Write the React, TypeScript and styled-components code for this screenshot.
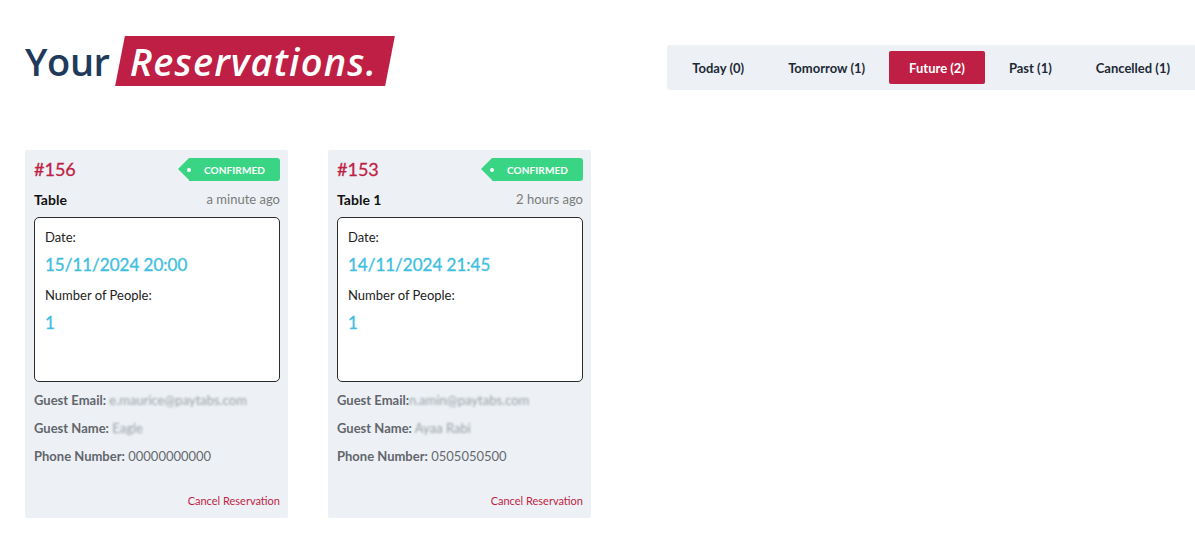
import React from "react";
import styled, { createGlobalStyle } from "styled-components";

const Global = createGlobalStyle`
  html, body { margin: 0; padding: 0; background: #ffffff; }
  body { font-family: Lato, "Noto Sans", sans-serif; overflow: hidden; }
  * { box-sizing: border-box; }
`;

const Page = styled.div`
  width: 1195px;
  height: 545px;
  padding: 36px 0 0 25px;
  overflow: hidden;
`;

const Header = styled.header`
  display: flex;
  align-items: flex-start;
`;

const Title = styled.h1`
  margin: 0;
  display: flex;
  align-items: center;
  height: 50px;
  font-family: "Open Sans", "Noto Sans", sans-serif;
  font-weight: 600;
  font-size: 38px;
  letter-spacing: -0.4px;
  color: #1f3a5b;
`;

const Highlight = styled.span`
  position: relative;
  display: inline-flex;
  align-items: center;
  height: 50px;
  margin-left: 10px;
  padding: 0 12px 0 10px;
  color: #ffffff;
  font-style: italic;
  letter-spacing: 1.2px;
  z-index: 0;
  &::before {
    content: "";
    position: absolute;
    inset: 0;
    background: #c01f45;
    transform: skewX(-11deg);
    z-index: -1;
  }
`;

const Tabs = styled.nav`
  margin-left: auto;
  margin-top: 9px;
  flex-shrink: 0;
  display: flex;
  gap: 4px;
  padding: 6px 5px;
  background: #edf1f5;
  border-radius: 3px 0 0 3px;
`;

const Tab = styled.button<{ $active?: boolean }>`
  height: 33px;
  padding: 0 20px;
  border: none;
  border-radius: 2px;
  background: ${(p) => (p.$active ? "#c01f45" : "transparent")};
  color: ${(p) => (p.$active ? "#ffffff" : "#1d2a36")};
  font-family: Lato, sans-serif;
  font-weight: 700;
  font-size: 13px;
  white-space: nowrap;
  cursor: pointer;
`;

const Cards = styled.section`
  display: flex;
  gap: 40px;
  margin-top: 60px;
`;

const Card = styled.article`
  width: 263px;
  height: 368px;
  background: #edf1f5;
  border-radius: 2px;
  padding: 8px 8px 10px 9px;
  display: flex;
  flex-direction: column;
`;

const CardHead = styled.div`
  display: flex;
  align-items: center;
  justify-content: space-between;
  height: 23px;
`;

const Number = styled.span`
  font-size: 18px;
  font-weight: 400;
  color: #c01f45;
  line-height: 23px;
  -webkit-text-stroke: 0.3px #c01f45;
`;

const Tag = styled.span`
  position: relative;
  display: inline-flex;
  align-items: center;
  height: 23px;
  width: 91px;
  padding-left: 15px;
  background: #3ad584;
  border-radius: 0 3px 3px 0;
  color: #ffffff;
  font-size: 10px;
  font-weight: 700;
  letter-spacing: 0.1px;
  &::before {
    content: "";
    position: absolute;
    left: -11px;
    top: 0;
    border-style: solid;
    border-width: 11.5px 11px 11.5px 0;
    border-color: transparent #3ad584 transparent transparent;
  }
  &::after {
    content: "";
    position: absolute;
    left: -2px;
    top: 9.5px;
    width: 4px;
    height: 4px;
    border-radius: 50%;
    background: #ffffff;
  }
`;

const SubRow = styled.div`
  display: flex;
  justify-content: space-between;
  align-items: center;
  margin-top: 8px;
  height: 20px;
`;

const TableName = styled.span`
  font-size: 14px;
  font-weight: 700;
  color: #111;
`;

const Ago = styled.span`
  font-size: 13px;
  color: #7a7a7a;
`;

const DetailBox = styled.div`
  margin-top: 8px;
  height: 165px;
  background: #ffffff;
  border: 1.5px solid #2b2b2b;
  border-radius: 5px;
  padding: 8.5px 10px;
`;

const Label = styled.div<{ $gap?: number }>`
  font-size: 13px;
  line-height: 20px;
  color: #222;
  margin-top: ${(p) => p.$gap ?? 0}px;
`;

const Value = styled.div`
  margin-top: 6px;
  font-size: 17px;
  line-height: 24px;
  font-weight: 400;
  color: #40bfdf;
  -webkit-text-stroke: 0.35px #40bfdf;
`;

const Info = styled.div`
  margin-top: 8px;
  display: flex;
  flex-direction: column;
  gap: 8px;
`;

const InfoRow = styled.div`
  font-size: 13px;
  line-height: 20px;
  color: #666a70;
  white-space: nowrap;
`;

const InfoLabel = styled.b`
  font-weight: 700;
  color: #62666c;
`;

const Blurred = styled.span`
  color: #9aa0a6;
  filter: blur(1.3px);
`;

const Footer = styled.div`
  margin-top: auto;
  display: flex;
  justify-content: flex-end;
`;

const CancelLink = styled.a`
  font-size: 11px;
  line-height: 14px;
  color: #c01f45;
  text-decoration: none;
  cursor: pointer;
`;

type Reservation = {
  id: number;
  table: string;
  ago: string;
  date: string;
  people: number;
  email: string;
  name: string;
  phone: string;
  emailGap: boolean;
};

const data: Reservation[] = [
  {
    id: 156,
    table: "Table",
    ago: "a minute ago",
    date: "15/11/2024 20:00",
    people: 1,
    email: "e.maurice@paytabs.com",
    name: "Eagle",
    phone: "00000000000",
    emailGap: true,
  },
  {
    id: 153,
    table: "Table 1",
    ago: "2 hours ago",
    date: "14/11/2024 21:45",
    people: 1,
    email: "n.amin@paytabs.com",
    name: "Ayaa Rabi",
    phone: "0505050500",
    emailGap: false,
  },
];

const tabs = [
  { label: "Today (0)" },
  { label: "Tomorrow (1)" },
  { label: "Future (2)", active: true },
  { label: "Past (1)" },
  { label: "Cancelled (1)" },
];

export default function App() {
  return (
    <>
      <Global />
      <Page>
        <Header>
          <Title>
            Your <Highlight>Reservations.</Highlight>
          </Title>
          <Tabs>
            {tabs.map((t) => (
              <Tab key={t.label} $active={t.active}>
                {t.label}
              </Tab>
            ))}
          </Tabs>
        </Header>
        <Cards>
          {data.map((r) => (
            <Card key={r.id}>
              <CardHead>
                <Number>#{r.id}</Number>
                <Tag>CONFIRMED</Tag>
              </CardHead>
              <SubRow>
                <TableName>{r.table}</TableName>
                <Ago>{r.ago}</Ago>
              </SubRow>
              <DetailBox>
                <Label>Date:</Label>
                <Value>{r.date}</Value>
                <Label $gap={8}>Number of People:</Label>
                <Value>{r.people}</Value>
              </DetailBox>
              <Info>
                <InfoRow>
                  <InfoLabel>Guest Email:</InfoLabel>
                  {r.emailGap ? " " : ""}
                  <Blurred>{r.email}</Blurred>
                </InfoRow>
                <InfoRow>
                  <InfoLabel>Guest Name:</InfoLabel>{" "}
                  <Blurred>{r.name}</Blurred>
                </InfoRow>
                <InfoRow>
                  <InfoLabel>Phone Number:</InfoLabel> {r.phone}
                </InfoRow>
              </Info>
              <Footer>
                <CancelLink>Cancel Reservation</CancelLink>
              </Footer>
            </Card>
          ))}
        </Cards>
      </Page>
    </>
  );
}
